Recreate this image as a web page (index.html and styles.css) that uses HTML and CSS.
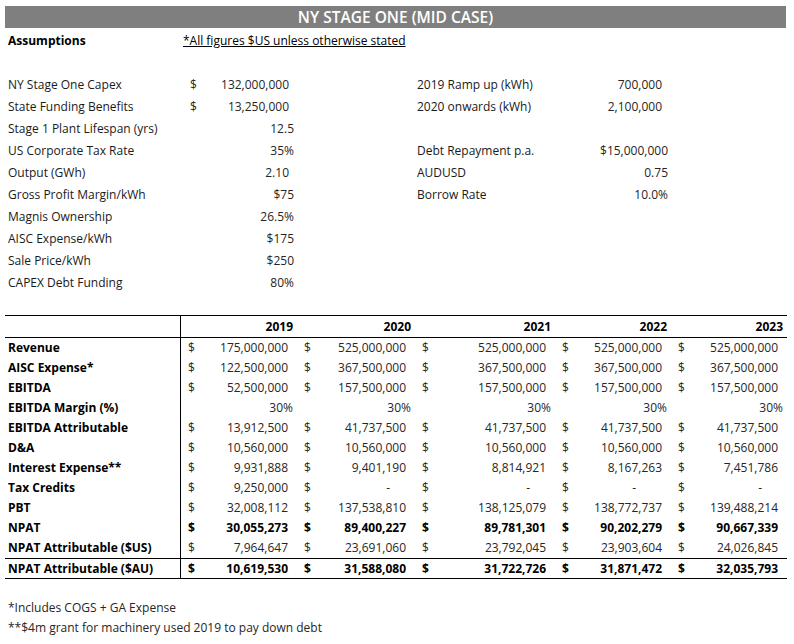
FILE: index.html
```html
<!DOCTYPE html>
<html>
<head>
<meta charset="utf-8">
<link rel="stylesheet" href="styles.css">
</head>
<body>
<div class="page">
  <div class="title">NY STAGE ONE (MID CASE)</div>

  <div class="assume">
    <div class="head">Assumptions</div>
    <div class="note">*All figures $US unless otherwise stated</div>
    <div class="blank"></div>

    <div class="lab">NY Stage One Capex</div>
    <div class="val"><span>$</span><span>132,000,000</span></div>
    <div></div>
    <div class="lab">2019 Ramp up (kWh)</div>
    <div class="rv wide">700,000</div>

    <div class="lab">State Funding Benefits</div>
    <div class="val"><span>$</span><span>13,250,000</span></div>
    <div></div>
    <div class="lab">2020 onwards (kWh)</div>
    <div class="rv wide">2,100,000</div>

    <div class="lab">Stage 1 Plant Lifespan (yrs)</div>
    <div class="val pct"><span></span><span>12.5</span></div>
    <div></div><div></div><div></div>

    <div class="lab">US Corporate Tax Rate</div>
    <div class="val pct"><span></span><span>35%</span></div>
    <div></div>
    <div class="lab">Debt Repayment p.a.</div>
    <div class="rv">$15,000,000</div>

    <div class="lab">Output (GWh)</div>
    <div class="val"><span></span><span>2.10</span></div>
    <div></div>
    <div class="lab">AUDUSD</div>
    <div class="rv">0.75</div>

    <div class="lab">Gross Profit Margin/kWh</div>
    <div class="val pct"><span></span><span>$75</span></div>
    <div></div>
    <div class="lab">Borrow Rate</div>
    <div class="rv">10.0%</div>

    <div class="lab">Magnis Ownership</div>
    <div class="val pct"><span></span><span>26.5%</span></div>
    <div></div><div></div><div></div>

    <div class="lab">AISC Expense/kWh</div>
    <div class="val pct"><span></span><span>$175</span></div>
    <div></div><div></div><div></div>

    <div class="lab">Sale Price/kWh</div>
    <div class="val pct"><span></span><span>$250</span></div>
    <div></div><div></div><div></div>

    <div class="lab">CAPEX Debt Funding</div>
    <div class="val pct"><span></span><span>80%</span></div>
    <div></div><div></div><div></div>
  </div>

  <table class="fin">
    <colgroup>
      <col class="c-lab"><col class="c-a"><col class="c-b"><col class="c-c"><col class="c-a"><col class="c-a">
    </colgroup>
    <thead>
      <tr>
        <th class="lab-cell"></th>
        <th>2019</th><th>2020</th><th>2021</th><th>2022</th><th>2023</th>
      </tr>
    </thead>
    <tbody>
      <tr>
        <td class="lab-cell">Revenue</td>
        <td><div class="m"><span>$</span><span>175,000,000</span></div></td>
        <td><div class="m"><span>$</span><span>525,000,000</span></div></td>
        <td><div class="m"><span>$</span><span>525,000,000</span></div></td>
        <td><div class="m"><span>$</span><span>525,000,000</span></div></td>
        <td><div class="m"><span>$</span><span>525,000,000</span></div></td>
      </tr>
      <tr>
        <td class="lab-cell">AISC Expense*</td>
        <td><div class="m"><span>$</span><span>122,500,000</span></div></td>
        <td><div class="m"><span>$</span><span>367,500,000</span></div></td>
        <td><div class="m"><span>$</span><span>367,500,000</span></div></td>
        <td><div class="m"><span>$</span><span>367,500,000</span></div></td>
        <td><div class="m"><span>$</span><span>367,500,000</span></div></td>
      </tr>
      <tr>
        <td class="lab-cell">EBITDA</td>
        <td><div class="m"><span>$</span><span>52,500,000</span></div></td>
        <td><div class="m"><span>$</span><span>157,500,000</span></div></td>
        <td><div class="m"><span>$</span><span>157,500,000</span></div></td>
        <td><div class="m"><span>$</span><span>157,500,000</span></div></td>
        <td><div class="m"><span>$</span><span>157,500,000</span></div></td>
      </tr>
      <tr>
        <td class="lab-cell">EBITDA Margin (%)</td>
        <td class="pc">30%</td>
        <td class="pc">30%</td>
        <td class="pc">30%</td>
        <td class="pc">30%</td>
        <td class="pc">30%</td>
      </tr>
      <tr>
        <td class="lab-cell">EBITDA Attributable</td>
        <td><div class="m"><span>$</span><span>13,912,500</span></div></td>
        <td><div class="m"><span>$</span><span>41,737,500</span></div></td>
        <td><div class="m"><span>$</span><span>41,737,500</span></div></td>
        <td><div class="m"><span>$</span><span>41,737,500</span></div></td>
        <td><div class="m"><span>$</span><span>41,737,500</span></div></td>
      </tr>
      <tr>
        <td class="lab-cell">D&amp;A</td>
        <td><div class="m"><span>$</span><span>10,560,000</span></div></td>
        <td><div class="m"><span>$</span><span>10,560,000</span></div></td>
        <td><div class="m"><span>$</span><span>10,560,000</span></div></td>
        <td><div class="m"><span>$</span><span>10,560,000</span></div></td>
        <td><div class="m"><span>$</span><span>10,560,000</span></div></td>
      </tr>
      <tr>
        <td class="lab-cell">Interest Expense**</td>
        <td><div class="m"><span>$</span><span>9,931,888</span></div></td>
        <td><div class="m"><span>$</span><span>9,401,190</span></div></td>
        <td><div class="m"><span>$</span><span>8,814,921</span></div></td>
        <td><div class="m"><span>$</span><span>8,167,263</span></div></td>
        <td><div class="m"><span>$</span><span>7,451,786</span></div></td>
      </tr>
      <tr>
        <td class="lab-cell">Tax Credits</td>
        <td><div class="m"><span>$</span><span>9,250,000</span></div></td>
        <td><div class="m"><span>$</span><span class="dash">-</span></div></td>
        <td><div class="m"><span>$</span><span class="dash">-</span></div></td>
        <td><div class="m"><span>$</span><span class="dash dash-wide">-</span></div></td>
        <td><div class="m"><span>$</span><span class="dash">-</span></div></td>
      </tr>
      <tr>
        <td class="lab-cell">PBT</td>
        <td><div class="m"><span>$</span><span>32,008,112</span></div></td>
        <td><div class="m"><span>$</span><span>137,538,810</span></div></td>
        <td><div class="m"><span>$</span><span>138,125,079</span></div></td>
        <td><div class="m"><span>$</span><span>138,772,737</span></div></td>
        <td><div class="m"><span>$</span><span>139,488,214</span></div></td>
      </tr>
      <tr class="bold">
        <td class="lab-cell">NPAT</td>
        <td><div class="m"><span>$</span><span>30,055,273</span></div></td>
        <td><div class="m"><span>$</span><span>89,400,227</span></div></td>
        <td><div class="m"><span>$</span><span>89,781,301</span></div></td>
        <td><div class="m"><span>$</span><span>90,202,279</span></div></td>
        <td><div class="m"><span>$</span><span>90,667,339</span></div></td>
      </tr>
      <tr>
        <td class="lab-cell">NPAT Attributable ($US)</td>
        <td><div class="m"><span>$</span><span>7,964,647</span></div></td>
        <td><div class="m"><span>$</span><span>23,691,060</span></div></td>
        <td><div class="m"><span>$</span><span>23,792,045</span></div></td>
        <td><div class="m"><span>$</span><span>23,903,604</span></div></td>
        <td><div class="m"><span>$</span><span>24,026,845</span></div></td>
      </tr>
      <tr class="bold total">
        <td class="lab-cell">NPAT Attributable ($AU)</td>
        <td><div class="m"><span>$</span><span>10,619,530</span></div></td>
        <td><div class="m"><span>$</span><span>31,588,080</span></div></td>
        <td><div class="m"><span>$</span><span>31,722,726</span></div></td>
        <td><div class="m"><span>$</span><span>31,871,472</span></div></td>
        <td><div class="m"><span>$</span><span>32,035,793</span></div></td>
      </tr>
    </tbody>
  </table>

  <div class="foot">
    <div>*Includes COGS + GA Expense</div>
    <div>**$4m grant for machinery used 2019 to pay down debt</div>
  </div>
</div>
</body>
</html>
```

FILE: styles.css
```css
html, body {
  margin: 0;
  padding: 0;
  background: #ffffff;
}

body {
  font-family: "Open Sans", "Noto Sans", sans-serif;
  font-size: 12px;
  color: #262626;
}

.page {
  width: 794px;
  height: 644px;
  overflow: hidden;
}

.title {
  margin: 6px 0 0 5px;
  width: 781px;
  height: 22px;
  background: #7f7f7f;
  color: #ffffff;
  font-weight: 600;
  font-size: 15.5px;
  display: flex;
  align-items: center;
  justify-content: center;
}

.assume {
  margin: 1px 0 0 8px;
  display: grid;
  grid-template-columns: 175px 114px 120px 170px 85px;
  grid-auto-rows: 22px;
  align-items: center;
}

.head {
  font-weight: 700;
  color: #000000;
}

.note {
  grid-column: 2 / 6;
  text-decoration: underline;
  color: #000000;
}

.blank {
  grid-column: 1 / 6;
}

.lab {
  color: #1a1a1a;
}

.val {
  display: flex;
  justify-content: space-between;
  padding: 0 8px 0 7px;
}

.val.pct {
  padding-right: 3px;
}

.rv {
  text-align: right;
  padding-right: 4px;
}

.rv.wide {
  padding-right: 10px;
}

.fin {
  margin: 22px 0 0 5px;
  border-collapse: separate;
  border-spacing: 0;
  table-layout: fixed;
  width: 782px;
}

.c-lab { width: 176px; }
.c-a { width: 116px; }
.c-b { width: 118px; }
.c-c { width: 140px; }

.fin th,
.fin td {
  padding: 0;
  height: 20px;
  line-height: 20px;
  white-space: nowrap;
}

.fin thead th {
  border-top: 1px solid #000000;
  border-bottom: 1px solid #000000;
  height: 21px;
  line-height: 21px;
  text-align: right;
  padding-right: 4px;
  font-weight: 700;
  color: #000000;
}

.fin .lab-cell {
  border-right: 1px solid #000000;
  text-align: left;
  padding-left: 3px;
  font-weight: 700;
  color: #000000;
}

.fin thead .lab-cell {
  padding-left: 0;
}

.m {
  display: flex;
  justify-content: space-between;
  padding: 0 9px 0 7px;
}

.fin td.pc {
  text-align: right;
  padding-right: 4px;
}

.dash {
  margin-right: 16px;
}

.dash-wide {
  margin-right: 26px;
}

.fin tr.bold td {
  font-weight: 700;
  color: #000000;
}

.fin tr.total td {
  border-top: 1px solid #000000;
  border-bottom: 1px solid #000000;
  height: 19px;
  line-height: 19px;
}

.foot {
  margin: 19px 0 0 8px;
  line-height: 20px;
}
```
